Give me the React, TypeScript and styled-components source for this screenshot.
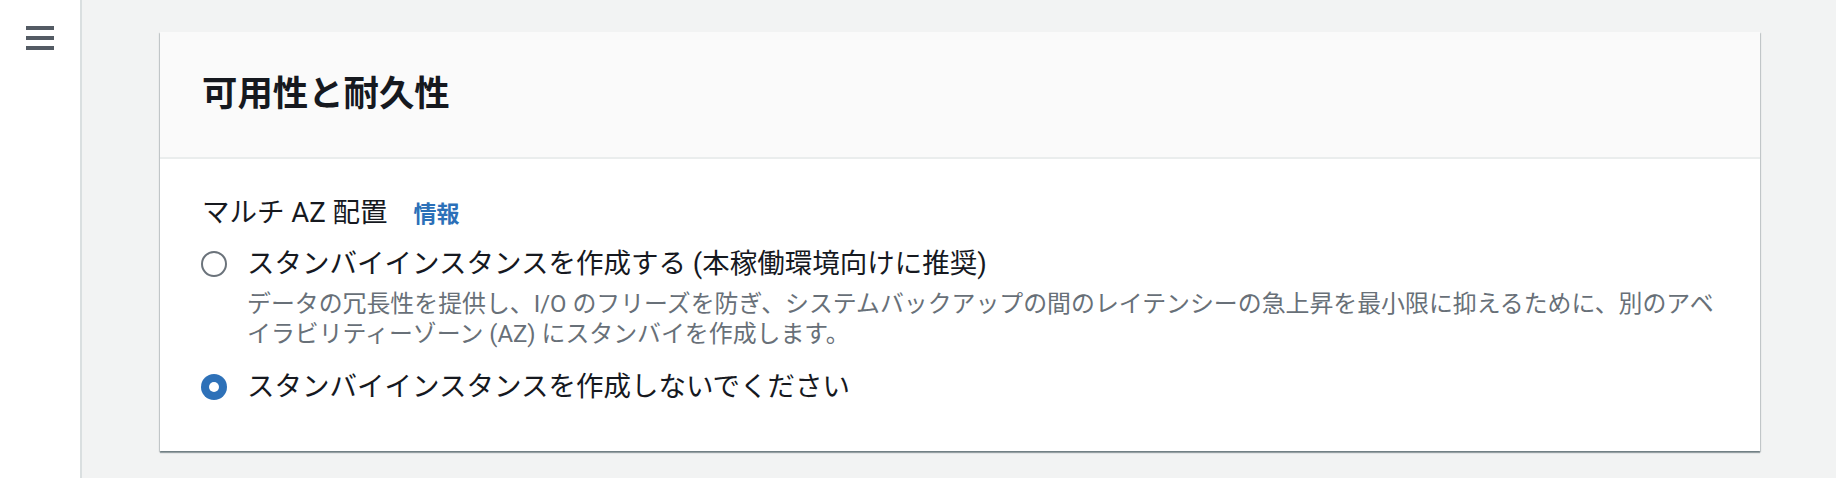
import React from "react";
import styled, { createGlobalStyle } from "styled-components";

const GlobalStyle = createGlobalStyle`
  html, body {
    margin: 0;
    padding: 0;
    background: #f2f3f3;
  }
  body {
    font-family: Roboto, "Noto Sans CJK JP", "Noto Sans", sans-serif;
    color: #16191f;
  }
  * { box-sizing: border-box; }
`;

const Layout = styled.div`
  display: flex;
  min-height: 100vh;
`;

const Sidebar = styled.aside`
  width: 82px;
  flex: 0 0 82px;
  background: #ffffff;
  border-right: 2px solid #dadfe0;
  padding: 26px 0 0 26px;
`;

const MenuButton = styled.button`
  display: block;
  width: 28px;
  height: 24px;
  padding: 0;
  border: 0;
  background: transparent;
  cursor: pointer;
  color: #545b64;
`;

const Main = styled.main`
  flex: 1;
  padding: 32px 76px 26px 78px;
`;

const Card = styled.section`
  width: 1600px;
  background: #ffffff;
  box-shadow: 0 2px 1px 0 rgba(0, 28, 36, 0.35), 1px 1px 1px 0 rgba(0, 28, 36, 0.15),
    -1px 1px 1px 0 rgba(0, 28, 36, 0.15);
`;

const CardHeader = styled.header`
  background: #fafafa;
  border-bottom: 2px solid #eaeded;
  padding: 37px 42px 44px;
`;

const Title = styled.h2`
  margin: 0;
  font-family: "Noto Sans CJK JP", sans-serif;
  font-size: 35.4px;
  line-height: 44px;
  font-weight: 700;
  color: #16191f;
`;

const CardBody = styled.div`
  padding: 36px 40px 46px 42px;
`;

const FieldLabelRow = styled.div`
  display: flex;
  align-items: baseline;
  gap: 26px;
`;

const FieldLabel = styled.span`
  font-size: 27.5px;
  line-height: 36px;
  color: #16191f;
`;

const InfoLink = styled.a`
  font-family: "Noto Sans CJK JP", sans-serif;
  font-size: 23px;
  font-weight: 700;
  color: #2c70b8;
  text-decoration: none;
  cursor: pointer;
`;

const RadioGroup = styled.div`
  display: flex;
  flex-direction: column;
  gap: 20px;
  margin-top: 15px;
`;

const RadioOption = styled.label`
  display: grid;
  grid-template-columns: 26px 1fr;
  column-gap: 20px;
  margin-left: -1px;
  cursor: pointer;
`;

const RadioCircle = styled.span<{ $checked?: boolean }>`
  width: 26px;
  height: 26px;
  margin-top: 5px;
  border-radius: 50%;
  display: flex;
  align-items: center;
  justify-content: center;
  background: ${(p) => (p.$checked ? "#2e71b8" : "#ffffff")};
  border: ${(p) => (p.$checked ? "none" : "2px solid #6b737b")};
  &::after {
    content: "";
    display: ${(p) => (p.$checked ? "block" : "none")};
    width: 10px;
    height: 10px;
    border-radius: 50%;
    background: #ffffff;
  }
`;

const OptionContent = styled.div`
  display: flex;
  flex-direction: column;
`;

const OptionText = styled.span`
  font-size: 27.5px;
  line-height: 36px;
  color: #16191f;
`;

const OptionDescription = styled.span`
  margin-top: 7px;
  font-size: 23.9px;
  line-height: 30px;
  color: #687078;
`;

const MenuIcon = () => (
  <svg width="28" height="24" viewBox="0 0 28 24" aria-hidden="true">
    <rect x="0" y="0" width="28" height="4" fill="currentColor" />
    <rect x="0" y="10" width="28" height="4" fill="currentColor" />
    <rect x="0" y="20" width="28" height="4" fill="currentColor" />
  </svg>
);

type Option = { label: string; description?: string; checked?: boolean };

const options: Option[] = [
  {
    label: "スタンバイインスタンスを作成する (本稼働環境向けに推奨)",
    description:
      "データの冗長性を提供し、I/O のフリーズを防ぎ、システムバックアップの間のレイテンシーの急上昇を最小限に抑えるために、別のアベイラビリティーゾーン (AZ) にスタンバイを作成します。",
  },
  { label: "スタンバイインスタンスを作成しないでください", checked: true },
];

export default function App() {
  return (
    <>
      <GlobalStyle />
      <Layout>
        <Sidebar>
          <MenuButton aria-label="メニュー">
            <MenuIcon />
          </MenuButton>
        </Sidebar>
        <Main>
          <Card>
            <CardHeader>
              <Title>可用性と耐久性</Title>
            </CardHeader>
            <CardBody>
              <FieldLabelRow>
                <FieldLabel>マルチ AZ 配置</FieldLabel>
                <InfoLink>情報</InfoLink>
              </FieldLabelRow>
              <RadioGroup>
                {options.map((o) => (
                  <RadioOption key={o.label}>
                    <RadioCircle $checked={o.checked} />
                    <OptionContent>
                      <OptionText>{o.label}</OptionText>
                      {o.description && <OptionDescription>{o.description}</OptionDescription>}
                    </OptionContent>
                  </RadioOption>
                ))}
              </RadioGroup>
            </CardBody>
          </Card>
        </Main>
      </Layout>
    </>
  );
}
